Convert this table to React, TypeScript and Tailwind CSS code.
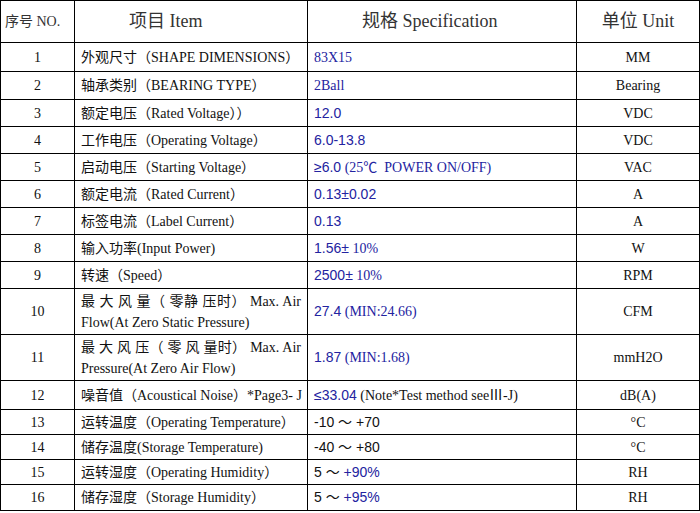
const B = "text-[#2323a0]";
const sans = "[font-family:'Liberation_Sans','Noto_Sans_CJK_SC',sans-serif]";
const serif = "[font-family:'Liberation_Serif','Noto_Sans_CJK_SC',serif]";

type Row = {
  no: string;
  item: React.ReactNode;
  spec: React.ReactNode;
  unit: string;
  h: string;
};

const rows: Row[] = [
  { no: "1", item: "外观尺寸（SHAPE DIMENSIONS）", spec: <span className={B}>83X15</span>, unit: "MM", h: "h-[29px]" },
  { no: "2", item: "轴承类别（BEARING TYPE）", spec: <span className={B}>2Ball</span>, unit: "Bearing", h: "h-[28px]" },
  { no: "3", item: "额定电压（Rated Voltage））", spec: <span className={`${B} ${sans}`}>12.0</span>, unit: "VDC", h: "h-[27px]" },
  { no: "4", item: "工作电压（Operating Voltage）", spec: <span className={`${B} ${sans}`}>6.0-13.8</span>, unit: "VDC", h: "h-[27px]" },
  {
    no: "5",
    item: "启动电压（Starting Voltage）",
    spec: (
      <span className={B}>
        <span className={sans}>≥6.0</span> (25℃&nbsp; POWER ON/OFF)
      </span>
    ),
    unit: "VAC",
    h: "h-[27px]",
  },
  { no: "6", item: "额定电流（Rated Current）", spec: <span className={`${B} ${sans}`}>0.13±0.02</span>, unit: "A", h: "h-[27px]" },
  { no: "7", item: "标签电流（Label Current）", spec: <span className={`${B} ${sans}`}>0.13</span>, unit: "A", h: "h-[27px]" },
  {
    no: "8",
    item: "输入功率(Input Power)",
    spec: (
      <span className={B}>
        <span className={sans}>1.56±</span> 10%
      </span>
    ),
    unit: "W",
    h: "h-[27px]",
  },
  {
    no: "9",
    item: "转速（Speed）",
    spec: (
      <span className={B}>
        <span className={sans}>2500±</span> 10%
      </span>
    ),
    unit: "RPM",
    h: "h-[27px]",
  },
  {
    no: "10",
    item: (
      <div className="leading-[21px]">
        <div className="text-justify [text-align-last:justify]">最 大 风 量（ 零静 压时） Max. Air</div>
        <div>Flow(At Zero Static Pressure)</div>
      </div>
    ),
    spec: (
      <span className={B}>
        <span className={sans}>27.4</span> (MIN:24.66)
      </span>
    ),
    unit: "CFM",
    h: "h-[46px]",
  },
  {
    no: "11",
    item: (
      <div className="leading-[21px]">
        <div className="text-justify [text-align-last:justify]">最 大 风 压（ 零 风 量时） Max. Air</div>
        <div>Pressure(At Zero Air Flow)</div>
      </div>
    ),
    spec: (
      <span className={B}>
        <span className={sans}>1.87</span> (MIN:1.68)
      </span>
    ),
    unit: "mmH2O",
    h: "h-[46px]",
  },
  {
    no: "12",
    item: "噪音值（Acoustical Noise）*Page3- J",
    spec: (
      <span>
        <span className={`${B} ${sans}`}>≤33.04</span> (Note*Test method seeⅢ-J)
      </span>
    ),
    unit: "dB(A)",
    h: "h-[29px]",
  },
  {
    no: "13",
    item: "运转温度（Operating Temperature）",
    spec: <span className={sans}>-10 ～ +70</span>,
    unit: "°C",
    h: "h-[25px]",
  },
  {
    no: "14",
    item: "储存温度(Storage Temperature)",
    spec: <span className={sans}>-40 ～ +80</span>,
    unit: "°C",
    h: "h-[25px]",
  },
  {
    no: "15",
    item: "运转湿度（Operating Humidity）",
    spec: (
      <span className={sans}>
        5 ～ <span className={B}>+90%</span>
      </span>
    ),
    unit: "RH",
    h: "h-[25px]",
  },
  {
    no: "16",
    item: "储存湿度（Storage Humidity）",
    spec: (
      <span className={sans}>
        5 ～ <span className={B}>+95%</span>
      </span>
    ),
    unit: "RH",
    h: "h-[26px]",
  },
];

export default function App() {
  return (
    <div className={`w-[700px] h-[513px] bg-white text-[#111] ${serif}`}>
      <table className="border-collapse table-fixed w-[699px]">
        <colgroup>
          <col className="w-[74px]" />
          <col className="w-[233px]" />
          <col className="w-[269px]" />
          <col className="w-[123px]" />
        </colgroup>
        <thead>
          <tr className="h-[42px] text-[#333]">
            <th className="border border-black font-normal text-[14px] text-left pl-1">序号 NO.</th>
            <th className="border border-black font-normal text-[18px] text-left pl-[54px]">项目 Item</th>
            <th className="border border-black font-normal text-[18px] text-left pl-[54px]">规格 Specification</th>
            <th className="border border-black font-normal text-[18px] text-center">单位 Unit</th>
          </tr>
        </thead>
        <tbody className="text-[14px]">
          {rows.map((r) => (
            <tr key={r.no} className={r.h}>
              <td className="border border-black text-center p-0">{r.no}</td>
              <td className="border border-black pl-[6px] pr-[6px] py-0 whitespace-nowrap">{r.item}</td>
              <td className="border border-black pl-[6px] py-0 whitespace-nowrap">{r.spec}</td>
              <td className="border border-black text-center text-[14px] p-0">{r.unit}</td>
            </tr>
          ))}
        </tbody>
      </table>
    </div>
  );
}
